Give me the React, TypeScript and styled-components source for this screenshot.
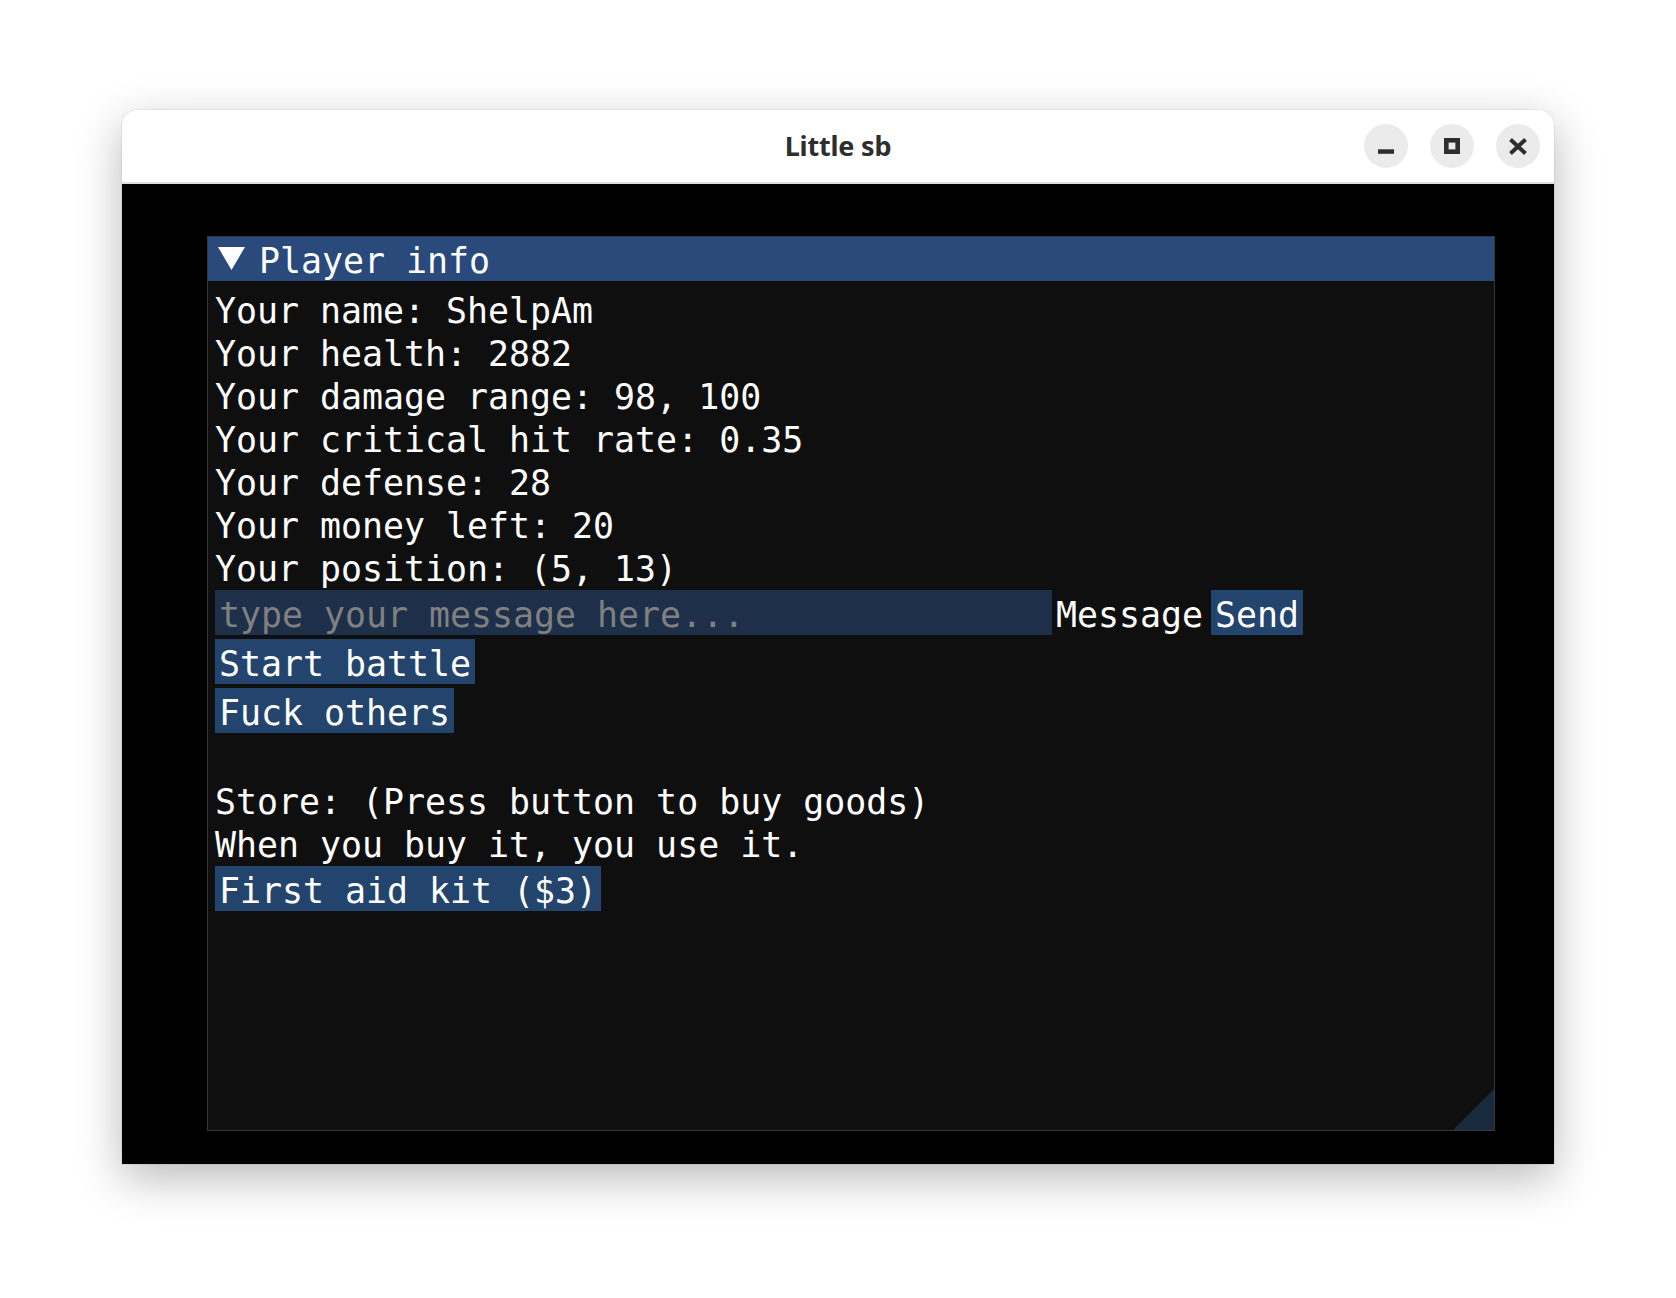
import React from "react";
import styled, { createGlobalStyle } from "styled-components";

const GlobalStyle = createGlobalStyle`
  html, body {
    margin: 0;
    padding: 0;
    background: #ffffff;
  }
`;

const Page = styled.div`
  width: 1676px;
  height: 1298px;
  padding: 110px 0 0 122px;
  box-sizing: border-box;
  background: #ffffff;
`;

const Window = styled.div`
  width: 1432px;
  height: 1054px;
  display: flex;
  flex-direction: column;
  border-radius: 16px 16px 0 0;
  overflow: hidden;
  box-shadow: 0 14px 46px rgba(0, 0, 0, 0.28), 0 0 0 1px rgba(0, 0, 0, 0.05);
`;

const TitleBar = styled.header`
  height: 72px;
  flex-shrink: 0;
  background: #ffffff;
  border-bottom: 2px solid #dedede;
  display: grid;
  grid-template-columns: 1fr auto 1fr;
  align-items: center;
`;

const TitleText = styled.div`
  grid-column: 2;
  font-family: "Noto Sans", "Open Sans", sans-serif;
  font-weight: 700;
  font-size: 27px;
  color: #2e2e2e;
  letter-spacing: -0.2px;
  margin-top: -2px;
`;

const Controls = styled.div`
  grid-column: 3;
  justify-self: end;
  display: flex;
  gap: 22px;
  padding-right: 14px;
`;

const ControlButton = styled.button`
  width: 44px;
  height: 44px;
  border-radius: 50%;
  border: none;
  padding: 0;
  background: #ebebeb;
  display: flex;
  align-items: center;
  justify-content: center;
  color: #2e2e2e;
`;

const Viewport = styled.main`
  flex: 1;
  background: #000000;
  padding: 52px 59px 33px 85px;
  box-sizing: border-box;
`;

const ImPanel = styled.section`
  position: relative;
  width: 1288px;
  height: 895px;
  box-sizing: border-box;
  border: 1px solid #37373f;
  background: #0f0f0f;
  display: flex;
  flex-direction: column;
  font-family: "DejaVu Sans Mono", "Liberation Mono", monospace;
  font-size: 34.9px;
  color: #ffffff;
`;

const ImTitle = styled.div`
  height: 44px;
  background: #294a7a;
  display: flex;
  align-items: flex-start;
  padding: 2px 0 0 10px;
  box-sizing: border-box;
`;

const Arrow = styled.svg`
  margin-top: 8px;
  flex-shrink: 0;
`;

const TitleLabel = styled.span`
  margin-left: 14px;
  height: 39px;
  line-height: 45px;
  white-space: pre;
`;

const ImBody = styled.div`
  display: flex;
  flex-direction: column;
  align-items: flex-start;
  gap: 4px;
  padding: 8px 7px;
`;

const Line = styled.div`
  height: 39px;
  line-height: 45px;
  white-space: pre;
`;

const InputRow = styled.div`
  display: flex;
  align-items: flex-start;
`;

const InputFrame = styled.div`
  width: 837px;
  height: 45px;
  box-sizing: border-box;
  padding: 3px 4px;
  background: #1d2f49;
`;

const Placeholder = styled(Line)`
  color: #808080;
`;

const Label = styled(Line)`
  margin-left: 4px;
  padding-top: 3px;
`;

const ImButton = styled.div<{ $gap?: number }>`
  height: 45px;
  box-sizing: border-box;
  padding: 3px 4px;
  margin-left: ${(p) => p.$gap ?? 0}px;
  background: #23456d;
  line-height: 45px;
  white-space: pre;
  overflow: hidden;
`;

const ResizeGrip = styled.div`
  position: absolute;
  right: 0;
  bottom: 0;
  width: 41px;
  height: 41px;
  background: #192a3e;
  clip-path: polygon(100% 0, 100% 100%, 0 100%);
`;

export default function App() {
  return (
    <>
      <GlobalStyle />
      <Page>
        <Window>
          <TitleBar>
            <TitleText>Little sb</TitleText>
            <Controls>
              <ControlButton aria-label="minimize">
                <svg width="16" height="16" viewBox="0 0 16 16">
                  <rect x="0" y="11.3" width="16" height="4.5" fill="currentColor" />
                </svg>
              </ControlButton>
              <ControlButton aria-label="maximize">
                <svg width="16" height="16" viewBox="0 0 16 16">
                  <rect x="2.3" y="2.3" width="11.4" height="11.4" fill="none" stroke="currentColor" strokeWidth="4.6" />
                </svg>
              </ControlButton>
              <ControlButton aria-label="close">
                <svg width="18" height="17" viewBox="0 0 18 17">
                  <path d="M1.5 1.5 L16.5 15.5 M16.5 1.5 L1.5 15.5" stroke="currentColor" strokeWidth="4" />
                </svg>
              </ControlButton>
            </Controls>
          </TitleBar>
          <Viewport>
            <ImPanel>
              <ImTitle>
                <Arrow width="27" height="23" viewBox="0 0 27 23">
                  <polygon points="0,0 27,0 13.5,23" fill="#ffffff" />
                </Arrow>
                <TitleLabel>Player info</TitleLabel>
              </ImTitle>
              <ImBody>
                <Line>Your name: ShelpAm</Line>
                <Line>Your health: 2882</Line>
                <Line>Your damage range: 98, 100</Line>
                <Line>Your critical hit rate: 0.35</Line>
                <Line>Your defense: 28</Line>
                <Line>Your money left: 20</Line>
                <Line>Your position: (5, 13)</Line>
                <InputRow>
                  <InputFrame>
                    <Placeholder>type your message here...</Placeholder>
                  </InputFrame>
                  <Label>Message</Label>
                  <ImButton $gap={8}>Send</ImButton>
                </InputRow>
                <ImButton>Start battle</ImButton>
                <ImButton>Fuck others</ImButton>
                <Line> </Line>
                <Line>Store: (Press button to buy goods)</Line>
                <Line>When you buy it, you use it.</Line>
                <ImButton>First aid kit ($3)</ImButton>
              </ImBody>
              <ResizeGrip />
            </ImPanel>
          </Viewport>
        </Window>
      </Page>
    </>
  );
}
